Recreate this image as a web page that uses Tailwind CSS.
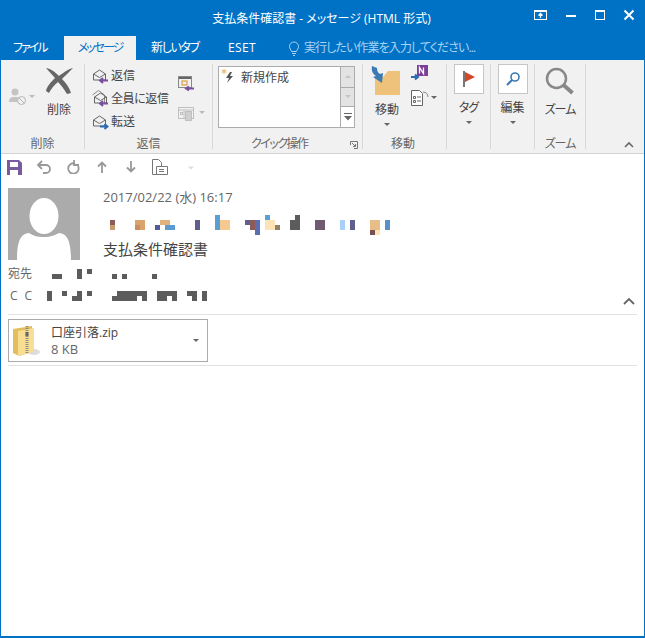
<!DOCTYPE html>
<html lang="ja">
<head>
<meta charset="UTF-8">
<title>支払条件確認書 - メッセージ (HTML 形式)</title>
<script src="https://cdn.jsdelivr.net/npm/@tailwindcss/browser@4"></script>
</head>
<body class="bg-white">
<div class="w-[645px] h-[638px] overflow-hidden border-x border-b-2 border-[#0072c6] bg-white flex flex-col font-['Open_Sans','Noto_Sans_CJK_JP',sans-serif] [font-feature-settings:'palt'] text-[12px] leading-[16px] text-[#444]">

  <!-- title bar -->
  <div class="h-[36px] bg-[#0072c6] relative flex justify-center items-center text-white text-[12px] shrink-0">
    <span class="ml-[-2px] mt-[2px]">支払条件確認書 - メッセージ (HTML 形式)</span>
    <div class="absolute left-[533px] top-[9px] flex items-start">
      <svg width="14" height="12" viewBox="0 0 14 12" fill="none" stroke="#fff"><rect x=".5" y="1.5" width="12" height="9"/><path d="M1 2.5h11" stroke-width="1"/><path d="M6.5 9V5M4.5 6.5l2-2 2 2" stroke-width="1.3"/></svg>
      <svg class="ml-[17px]" width="12" height="12" viewBox="0 0 12 12"><rect x="1" y="6" width="10" height="2" fill="#fff"/></svg>
      <svg class="ml-[17px]" width="12" height="12" viewBox="0 0 12 12" fill="none" stroke="#fff"><rect x="1.5" y="1.5" width="9" height="9"/><path d="M1 2h10" stroke-width="2"/></svg>
      <svg class="ml-[17px]" width="12" height="12" viewBox="0 0 12 12" fill="none" stroke="#fff" stroke-width="2"><path d="M1.5 1.5l9 9M10.5 1.5l-9 9"/></svg>
    </div>
  </div>

  <!-- tabs -->
  <div class="h-[24px] bg-[#0072c6] flex items-center text-white shrink-0">
    <span class="ml-[12px] w-[51px] tracking-[-2px]">ファイル</span>
    <span class="w-[72px] h-[24px] bg-[#f1f1f1] text-[#0072c6] flex items-center justify-center tracking-[-2px]">メッセージ</span>
    <span class="ml-[15px] w-[77px] tracking-[-1.400px]">新しいタブ</span>
    <span class="w-[60px] tracking-[0.400px]">ESET</span>
    <svg width="12" height="15" viewBox="0 0 12 15" fill="none" stroke="#a9d3f2" stroke-width="1"><path d="M3.5 10.5C3 8.500 1.500 7.500 1.500 5.500a4.500 4.500 0 0 1 9 0c0 2-1.500 3-2 5z"/><path d="M4 12.500h4M5 14.500h2"/></svg>
    <span class="ml-[4px] text-[#a9d3f2] tracking-[-0.900px]">実行したい作業を入力してください...</span>
  </div>

  <!-- ribbon -->
  <div class="h-[94px] bg-[#f1f1f1] border-b border-[#d2d2d2] flex shrink-0 text-[#444]">

    <!-- delete group -->
    <div class="w-[84px] flex flex-col border-r border-[#d8d8d8] my-[4px]">
      <div class="h-[72px] shrink-0 flex">
        <div class="w-[43px] pl-[7px] pt-[24px] flex items-start">
          <svg width="20" height="18" viewBox="0 0 20 18"><circle cx="7" cy="4" r="3.500" fill="#c4c4c4"/><path d="M1 14c0-4 2-5 6-5s5 2 5 5z" fill="#c4c4c4"/><circle cx="13.500" cy="12.500" r="4" fill="#f1f1f1" stroke="#b5b5b5"/><path d="M11 10l5 5" stroke="#b5b5b5"/></svg>
          <svg class="mt-[7px] ml-[1px]" width="6" height="4" viewBox="0 0 6 4"><path d="M0 0h6L3 3z" fill="#bbb"/></svg>
        </div>
        <div class="w-[30px] flex flex-col items-center pt-[3px]">
          <svg width="30" height="28" viewBox="0 0 30 28"><path d="M2 1c6 1 10 5 13 8 4-3 9-7 14-8-4 4-8 8-11 11 4 4 7 8 9 14l-4 1c-3-5-6-9-9-12-4 3-7 7-9 11l-3-2c1-5 5-9 9-13C8 8 5 4 2 1z" fill="#666"/></svg>
          <span class="mt-[7px]">削除</span>
        </div>
      </div>
      <span class="text-center text-[#666]">削除</span>
    </div>

    <!-- reply group -->
    <div class="w-[128px] flex flex-col border-r border-[#d8d8d8] my-[4px]">
      <div class="h-[72px] shrink-0 flex">
        <div class="w-[92px] pl-[7px] pt-[3px] flex flex-col gap-[6px]">
          <div class="flex items-center gap-[2px] h-[17px]">
            <svg width="17" height="16" viewBox="0 0 17 16" fill="none"><path d="M1.500 6l6-4 6 4v6h-12z" stroke="#666"/><path d="M1.500 6l6 3.500 6-3.500" stroke="#666"/><path d="M8 12.500h8M11 10l-3 2.500 3 2.500" stroke="#7b4fa0" stroke-width="2"/></svg>
            <span>返信</span>
          </div>
          <div class="flex items-center gap-[2px] h-[17px]">
            <svg width="17" height="17" viewBox="0 0 17 17" fill="none"><path d="M0.500 5l6-4.500 6 4.500v8" stroke="#888"/><path d="M2.500 7l6-4 6 4v6h-12z" stroke="#666"/><path d="M2.500 7l6 3.500 6-3.500" stroke="#666"/><path d="M8 13.500h8M11 11l-3 2.500 3 2.500" stroke="#7b4fa0" stroke-width="2"/></svg>
            <span class="tracking-[-0.400px]">全員に返信</span>
          </div>
          <div class="flex items-center gap-[2px] h-[17px]">
            <svg width="17" height="16" viewBox="0 0 17 16" fill="none"><path d="M1.500 6l6-4 6 4v6h-12z" stroke="#666"/><path d="M1.500 6l6 3.500 6-3.500" stroke="#666"/><path d="M8 12.500h7M12.500 10l3 2.500-3 2.500" stroke="#2b6cb0" stroke-width="2"/></svg>
            <span>転送</span>
          </div>
        </div>
        <div class="flex flex-col pt-[12px] ml-[1px]">
          <svg width="17" height="16" viewBox="0 0 17 16" fill="none"><rect x=".5" y=".5" width="13" height="11" stroke="#888"/><path d="M1 1h12v2H1z" fill="#666"/><rect x="4" y="5" width="5" height="4" stroke="#d98b2b"/><path d="M8 12.500h8M11 10.500l-3 2 3 2" stroke="#7b4fa0" stroke-width="2"/></svg>
          <div class="flex items-center mt-[13px]">
            <svg width="18" height="16" viewBox="0 0 18 16" fill="none" stroke="#c0c0c0"><rect x=".5" y="2.500" width="15" height="11"/><path d="M1 5h14M6 5v8"/><rect x="7.500" y="6.500" width="6" height="9" fill="#cfcfcf"/><rect x="2.500" y="7.500" width="2" height="2"/></svg>
            <svg class="ml-[3px]" width="6" height="4" viewBox="0 0 6 4"><path d="M0 0h6L3 3z" fill="#bbb"/></svg>
          </div>
        </div>
      </div>
      <span class="text-center text-[#666]">返信</span>
    </div>

    <!-- quick steps -->
    <div class="w-[150px] flex flex-col border-r border-[#d8d8d8] my-[4px] relative">
      <div class="h-[72px] shrink-0 pl-[5px] pt-[2px] flex items-start">
        <div class="w-[123px] h-[62px] bg-white border border-[#ababab] flex items-start pl-[2px] pt-[1px]">
          <svg width="14" height="15" viewBox="0 0 14 15"><path d="M3 0l.8 2.200L6 1.500 4.500 3.400 6 5 3.800 4.600 3 7 2.200 4.600 0 5l1.500-1.600L0 1.500l2.200.7z" fill="#f0bf7f"/><path d="M9 4L5 10h3l-2 5 6-7H9l2-4z" fill="#555"/></svg>
          <span class="ml-[6px] mt-[2px]">新規作成</span>
        </div>
        <div class="w-[14px] h-[62px] flex flex-col border-y border-r border-[#ababab]">
          <div class="h-[21px] bg-[#e3e3e3] border-b border-[#ababab] flex items-center justify-center"><svg width="6" height="4" viewBox="0 0 6 4"><path d="M0 3h6L3 0z" fill="#c4c4c4"/></svg></div>
          <div class="h-[19px] bg-[#e3e3e3] border-b border-[#ababab] flex items-center justify-center"><svg width="6" height="4" viewBox="0 0 6 4"><path d="M0 0h6L3 3z" fill="#c4c4c4"/></svg></div>
          <div class="flex-1 bg-white flex items-center justify-center"><svg width="8" height="8" viewBox="0 0 8 8"><path d="M0 .5h8" stroke="#666"/><path d="M0 3h8L4 7.500z" fill="#666"/></svg></div>
        </div>
      </div>
      <span class="pl-[38px] text-[#666] tracking-[-1.500px]">クイック操作</span>
      <svg class="absolute left-[137px] top-[77px]" width="8" height="8" viewBox="0 0 8 8" fill="none" stroke="#777"><path d="M.5 4V.5H7.500V7.500H4"/><path d="M2 2l3.500 3.500M5.500 3v2.500H3"/></svg>
    </div>

    <!-- move group -->
    <div class="w-[84px] flex flex-col border-r border-[#d8d8d8] my-[4px]">
      <div class="h-[72px] shrink-0 flex">
        <div class="w-[48px] flex flex-col items-center pt-[2px]">
          <svg width="32" height="30" viewBox="0 0 32 30"><path d="M4 11h8l5-6h12v24H4z" fill="#eec27a"/><path d="M1 0c-1 5 1 8 4 10l-3 1 9 6 1-10-3 1c-2-1-3-3-3-6z" fill="#3d79b3"/></svg>
          <span class="mt-[6px]">移動</span>
          <svg class="mt-[5px]" width="6" height="4" viewBox="0 0 6 4"><path d="M0 0h6L3 3z" fill="#666"/></svg>
        </div>
        <div class="flex flex-col">
          <svg width="18" height="17" viewBox="0 0 18 17"><rect x="6" y="1" width="11" height="11" fill="#7b3f98"/><path d="M8.500 9.500v-6l4 6v-6" stroke="#fff" stroke-width="1.300" fill="none"/><path d="M0 13h6M4 10.500L7 13l-3 2.500" stroke="#2b6cb0" stroke-width="2" fill="none"/></svg>
          <div class="flex items-center mt-[8px]">
            <svg width="18" height="18" viewBox="0 0 18 18" fill="none" stroke="#666"><path d="M.5 1.500h8l3 3v12H.5z" fill="#fff"/><path d="M2.500 7.500h2v2h-2zM2.500 11.500h2v2h-2zM6 8h4M6 12h4"/><path d="M12 3c3 0 5 2 5 5" stroke="#888"/></svg>
            <svg class="ml-[2px]" width="6" height="4" viewBox="0 0 6 4"><path d="M0 0h6L3 3z" fill="#666"/></svg>
          </div>
        </div>
      </div>
      <span class="pl-[28px] text-[#666]">移動</span>
    </div>

    <!-- tags -->
    <div class="w-[44px] flex flex-col items-center border-r border-[#d8d8d8] my-[4px]">
      <div class="w-[30px] h-[30px] border border-[#c6c6c6] bg-white flex items-center justify-center">
        <svg width="16" height="18" viewBox="0 0 16 18"><rect x="2" y="1" width="2" height="16" fill="#777"/><path d="M4 2l10 5-10 5z" fill="#d24726"/></svg>
      </div>
      <span class="mt-[6px] tracking-[-1px]">タグ</span>
      <svg class="mt-[5px]" width="6" height="4" viewBox="0 0 6 4"><path d="M0 0h6L3 3z" fill="#666"/></svg>
    </div>

    <!-- edit -->
    <div class="w-[44px] flex flex-col items-center border-r border-[#d8d8d8] my-[4px]">
      <div class="w-[30px] h-[30px] border border-[#c6c6c6] bg-white flex items-center justify-center">
        <svg width="16" height="16" viewBox="0 0 16 16" fill="none"><circle cx="10" cy="6" r="4" stroke="#3d79b3" stroke-width="1.600"/><path d="M7 9l-5 5" stroke="#3d79b3" stroke-width="2.200"/></svg>
      </div>
      <span class="mt-[6px]">編集</span>
      <svg class="mt-[5px]" width="6" height="4" viewBox="0 0 6 4"><path d="M0 0h6L3 3z" fill="#666"/></svg>
    </div>

    <!-- zoom -->
    <div class="w-[51px] flex flex-col items-center border-r border-[#d8d8d8] my-[4px]">
      <div class="h-[72px] shrink-0 flex flex-col items-center pt-[3px]">
        <svg width="30" height="28" viewBox="0 0 30 28" fill="none"><circle cx="11.500" cy="11.500" r="9.500" stroke="#888" stroke-width="2.500"/><path d="M18.500 18l9 8" stroke="#888" stroke-width="4"/></svg>
        <span class="mt-[7px] tracking-[-1px]">ズーム</span>
      </div>
      <span class="text-[#666] tracking-[-1px]">ズーム</span>
    </div>

    <div class="flex-1 relative">
      <svg class="absolute left-[38px] top-[81px]" width="10" height="7" viewBox="0 0 10 7" fill="none"><path d="M1 6l4-4 4 4" stroke="#666" stroke-width="1.600"/></svg>
    </div>
  </div>

  <!-- quick access toolbar -->
  <div class="h-[26px] flex items-center pl-[6px] shrink-0">
    <svg width="15" height="15" viewBox="0 0 15 15"><path d="M0 0h12l3 3v12H0z" fill="#7a5a9e"/><rect x="3" y="2" width="8" height="5" fill="#fff"/><rect x="3" y="10" width="8" height="5" fill="#fff"/></svg>
    <svg class="ml-[14px]" width="15" height="14" viewBox="0 0 15 14" fill="none" stroke="#999" stroke-width="1.800"><path d="M3 5h7a4 4 0 0 1 0 8H7"/><path d="M6 1L2 5l4 4"/></svg>
    <svg class="ml-[14px]" width="15" height="14" viewBox="0 0 15 14" fill="none" stroke="#999" stroke-width="1.800"><path d="M10 3.500a5.200 5.200 0 1 0 3 2.500"/><path d="M9 0v5h5"/></svg>
    <svg class="ml-[17px]" width="10" height="12" viewBox="0 0 10 12" fill="none" stroke="#999" stroke-width="1.800"><path d="M5 12V2M1 5.500L5 1.500l4 4"/></svg>
    <svg class="ml-[19px]" width="10" height="12" viewBox="0 0 10 12" fill="none" stroke="#999" stroke-width="1.800"><path d="M5 0v10M1 6.500l4 4 4-4"/></svg>
    <svg class="ml-[16px]" width="16" height="16" viewBox="0 0 16 16" fill="none" stroke="#777"><path d="M.5 15.500V.5h6l3 3v4M.5 15.500h15v-8h-11"/><path d="M4.500 7.500v8M7 10.500h5M7 12.500h5"/></svg>
    <svg class="ml-[20px]" width="6" height="6" viewBox="0 0 6 6"><path d="M0 .5h6M0 2.500h6L3 5.500z" stroke="none" fill="#ddd"/></svg>
  </div>

  <!-- message header -->
  <div class="flex pl-[7px] mt-[8px] shrink-0">
    <div class="w-[72px] h-[72px] bg-[#ababab] overflow-hidden">
      <svg width="72" height="72" viewBox="0 0 72 72"><ellipse cx="36" cy="28" rx="14.500" ry="18" fill="#fff"/><path d="M9 72c0-20 4-26 12-27 5 3 8 4 15 4s11-2 15-4c8 1 12 7 12 27z" fill="#fff"/></svg>
    </div>
    <div class="ml-[23px] flex flex-col">
      <span class="mt-[1px] text-[13px] text-[#666]">2017/02/22 (水) 16:17</span>
      <svg class="mt-[10px]" width="300" height="20" viewBox="103 215 300 20">
        <rect x="110" y="220" width="5" height="5" fill="#8f5a5a"/><rect x="110" y="225" width="5" height="5" fill="#c99a6e"/>
        <rect x="135" y="220" width="10" height="10" fill="#dca26b"/><rect x="135" y="225" width="5" height="5" fill="#c98e60"/>
        <rect x="155" y="225" width="5" height="5" fill="#555a99"/><rect x="160" y="220" width="10" height="5" fill="#e3b27c"/><rect x="165" y="225" width="10" height="5" fill="#5b9bd0"/>
        <rect x="195" y="220" width="5" height="10" fill="#5e5e8c"/>
        <rect x="215" y="215" width="5" height="15" fill="#5a9fd4"/><rect x="220" y="220" width="10" height="10" fill="#f5c98f"/>
        <rect x="245" y="220" width="5" height="5" fill="#5f5f8f"/><rect x="250" y="220" width="5" height="10" fill="#8f5a5a"/><rect x="255" y="220" width="5" height="15" fill="#5a6fb0"/>
        <rect x="265" y="215" width="5" height="5" fill="#5aa0d8"/><rect x="265" y="220" width="10" height="10" fill="#fbe3b5"/><rect x="275" y="225" width="5" height="5" fill="#8f8060"/>
        <rect x="290" y="220" width="10" height="10" fill="#5c5c5c"/><rect x="295" y="215" width="5" height="5" fill="#5c5c5c"/>
        <rect x="315" y="220" width="10" height="10" fill="#6f5a70"/>
        <rect x="340" y="220" width="5" height="10" fill="#a8d0f8"/><rect x="350" y="220" width="5" height="10" fill="#5e5e8c"/>
        <rect x="370" y="220" width="10" height="10" fill="#e8bd88"/><rect x="370" y="230" width="5" height="5" fill="#7a5050"/><rect x="375" y="230" width="5" height="5" fill="#fde5b8"/>
        <rect x="385" y="220" width="5" height="10" fill="#5a90c8"/>
      </svg>
      <span class="mt-[4px] text-[15px] leading-[20px] text-[#444]">支払条件確認書</span>
    </div>
  </div>

  <div class="h-[22px] mt-[3px] flex items-center pl-[7px] shrink-0">
    <span class="w-[40px] text-[#666]">宛先</span>
    <svg width="120" height="10" viewBox="48 267 120 10" fill="#5c5c5c"><rect x="52" y="272" width="10" height="5"/><rect x="77" y="267" width="5" height="10"/><rect x="87" y="267" width="5" height="5"/><rect x="112" y="272" width="5" height="5"/><rect x="122" y="272" width="5" height="5"/><rect x="152" y="272" width="5" height="5"/></svg>
  </div>
  <div class="h-[22px] flex items-center pl-[9px] shrink-0 relative">
    <span class="w-[37px] tracking-[7px] text-[#666]">CC</span>
    <svg width="170" height="10" viewBox="47 292 170 10" fill="#5c5c5c"><rect x="47" y="292" width="5" height="10"/><rect x="62" y="292" width="5" height="5"/><rect x="72" y="297" width="10" height="5"/><rect x="77" y="292" width="5" height="5"/><rect x="87" y="292" width="5" height="5"/><rect x="112" y="297" width="25" height="5"/><rect x="117" y="292" width="20" height="5"/><rect x="137" y="292" width="10" height="5"/><rect x="142" y="297" width="5" height="5"/><rect x="157" y="292" width="20" height="5"/><rect x="157" y="297" width="10" height="5"/><rect x="172" y="297" width="5" height="5"/><rect x="187" y="292" width="10" height="5"/><rect x="192" y="297" width="5" height="5"/><rect x="202" y="292" width="5" height="10"/></svg>
    <svg class="absolute left-[622px] top-[12px]" width="12" height="8" viewBox="0 0 12 8" fill="none"><path d="M1 7l5-5 5 5" stroke="#666" stroke-width="1.800"/></svg>
  </div>

  <!-- attachment -->
  <div class="mx-[7px] mt-[7px] border-y border-[#e1e1e1] pt-[4px] pb-[3px] shrink-0">
    <div class="w-[200px] h-[43px] border border-[#ababab] flex items-center relative">
      <svg class="ml-[4px]" width="28" height="32" viewBox="0 0 28 32"><ellipse cx="21" cy="27" rx="6" ry="3" fill="#ddd"/><path d="M0 4L19 1V27L6 31L0 28z" fill="#e6bd5c"/><path d="M5 6L21 3V27L5 31z" fill="#f7de92"/><path d="M14 1V28" stroke="#8d8d80" stroke-width="3" stroke-dasharray="1 1"/><rect x="12.500" y="7" width="3" height="4" fill="#666"/></svg>
      <div class="ml-[10px] flex flex-col text-[#444] leading-[16px]">
        <span>口座引落.zip</span>
        <span class="text-[13px] text-[#666]">8 KB</span>
      </div>
      <svg class="absolute left-[184px] top-[19px]" width="6" height="4" viewBox="0 0 6 4"><path d="M0 0h6L3 3z" fill="#666"/></svg>
    </div>
  </div>

  <div class="flex-1"></div>
</div>
</body>
</html>
